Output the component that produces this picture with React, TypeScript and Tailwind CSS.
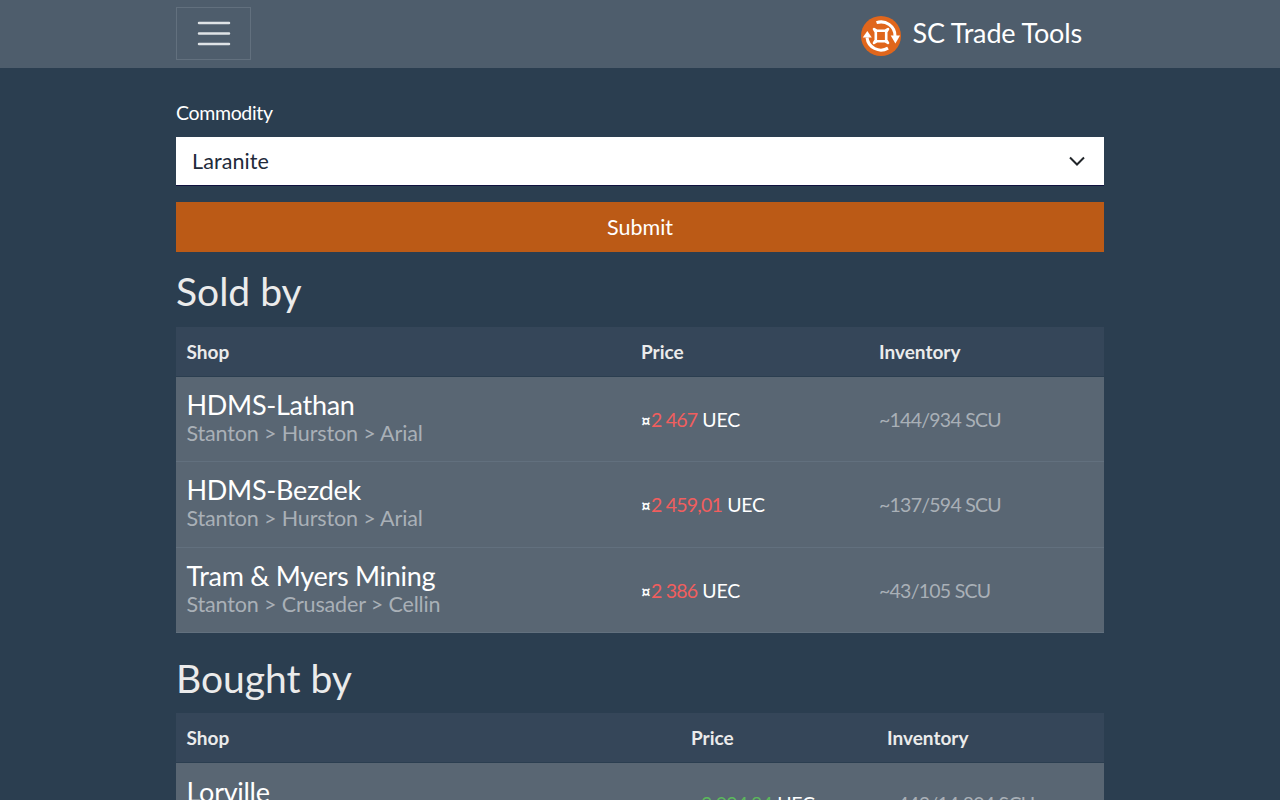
import React from "react";

type Row = {
  name: string;
  path: string;
  price: string;
  inventory: string;
};

const soldBy: Row[] = [
  { name: "HDMS-Lathan", path: "Stanton > Hurston > Arial", price: "2 467", inventory: "~144/934 SCU" },
  { name: "HDMS-Bezdek", path: "Stanton > Hurston > Arial", price: "2 459,01", inventory: "~137/594 SCU" },
  { name: "Tram & Myers Mining", path: "Stanton > Crusader > Cellin", price: "2 386", inventory: "~43/105 SCU" },
];

const boughtBy: Row[] = [
  { name: "Lorville", path: "Stanton > Hurston", price: "3 094,84", inventory: "~443/14 804 SCU" },
];

function Logo() {
  return (
    <svg width="40" height="40" viewBox="0 0 40 40" className="mt-[3px] shrink-0">
      <circle cx="20" cy="20" r="20" fill="#e0661c" />
      <path d="M15.500 6.700A14 14 0 0 1 34 20" fill="none" stroke="#fff" strokeWidth="3" />
      <path d="M27 32.100A14 14 0 0 1 6 21.500" fill="none" stroke="#fff" strokeWidth="3" />
      <path d="M29.700 19.500h9.300l-4.600 8z" fill="#fff" />
      <path d="M1.800 21.500h9l-4.500-6.500z" fill="#fff" />
      <path d="M13 13l3 1.800h8l3-1.800-1.800 3v8l1.800 3-3-1.800h-8l-3 1.800 1.800-3v-8z" fill="none" stroke="#fff" strokeWidth="2.600" strokeLinejoin="round" />
    </svg>
  );
}

function ShopTable({ rows, priceClass, priceColor, inventoryClass, cellOffset }: { rows: Row[]; priceClass: string; priceColor: string; inventoryClass: string; cellOffset: string }) {
  return (
    <div className="flex flex-col">
      <div className="flex h-[50.500px] items-center border-b border-[#2b3e50] bg-[#354659] pt-[1px] text-[19px] font-bold text-[#ebebeb]">
        <div className="flex-1 pl-[10.500px]">Shop</div>
        <div className={priceClass}>Price</div>
        <div className={inventoryClass}>Inventory</div>
      </div>
      {rows.map((row) => (
        <div key={row.name} className="flex h-[85.330px] shrink-0 items-center border-b border-[#62707e] bg-[#596673]">
          <div className="flex-1 pl-[10.500px]">
            <div className="text-[27px] leading-[29px] tracking-[-0.28px] text-white">{row.name}</div>
            <div className="text-[21.500px] leading-[29px] tracking-[-0.15px] text-[#a9b0b7]">{row.path}</div>
          </div>
          <div className={`${priceClass} ${cellOffset} text-[19.500px] text-white`}>
            <span className="text-[17px] font-bold">¤</span>
            <span className={`${priceColor} tracking-[-0.75px]`}>{row.price}</span> <span className="tracking-[-0.2px]">UEC</span>
          </div>
          <div className={`${inventoryClass} ${cellOffset} text-[19.500px] tracking-[-0.75px] text-[#a9b0b7]`}>{row.inventory}</div>
        </div>
      ))}
    </div>
  );
}

export default function App() {
  return (
    <div className="h-[800px] overflow-hidden bg-[#2b3e50] font-['Lato','Open_Sans',sans-serif] text-[#ebebeb]">
      <nav className="h-[68px] bg-[#4e5d6c]">
        <div className="mx-auto flex h-full w-[928px] items-center justify-between">
          <button className="mb-[2px] flex h-[53px] w-[75px] items-center justify-center border border-[#62707e] text-[#dfe3e6]">
            <svg width="34" height="26" viewBox="0 0 34 26">
              <path d="M2 3h30M2 13.500h30M2 24h30" stroke="currentColor" strokeWidth="2.500" strokeLinecap="round" />
            </svg>
          </button>
          <div className="mr-[22px] flex items-center gap-[12px] text-[27px] tracking-[-0.15px] text-white">
            <Logo />
            <span className="mb-[2px]">SC Trade Tools</span>
          </div>
        </div>
      </nav>

      <main className="mx-auto w-[928px] pt-[31px]">
        <label className="block text-[19.500px] leading-[27px] tracking-[-0.33px] text-white">Commodity</label>
        <div className="mt-[11px] flex h-[49px] items-center justify-between border-b border-[#10123f] bg-white pl-[16px] pr-[18px] text-[21.500px] tracking-[0.1px] text-[#212a3a]">
          <span>Laranite</span>
          <svg width="18" height="12" viewBox="0 0 18 12" className="text-[#212529]">
            <path d="M2 2.500l7 7 7-7" fill="none" stroke="currentColor" strokeWidth="2" />
          </svg>
        </div>
        <button className="mt-[16px] block h-[50px] w-full bg-[#bb5a16] text-[21.500px] text-white">Submit</button>

        <h2 className="mt-[14px] mb-[10.500px] text-[39px] leading-[50px] text-[#ebebeb]">Sold by</h2>
        <ShopTable rows={soldBy} priceClass="w-[238px]" priceColor="text-[#f15e5e]" inventoryClass="w-[225px]" cellOffset="pt-[1px]" />

        <h2 className="mt-[20px] mb-[10px] text-[39px] leading-[50px] text-[#ebebeb]">Bought by</h2>
        <ShopTable rows={boughtBy} priceClass="w-[196px]" priceColor="text-[#5cb85c]" inventoryClass="w-[217px]" cellOffset="pb-[5px]" />
      </main>
    </div>
  );
}
